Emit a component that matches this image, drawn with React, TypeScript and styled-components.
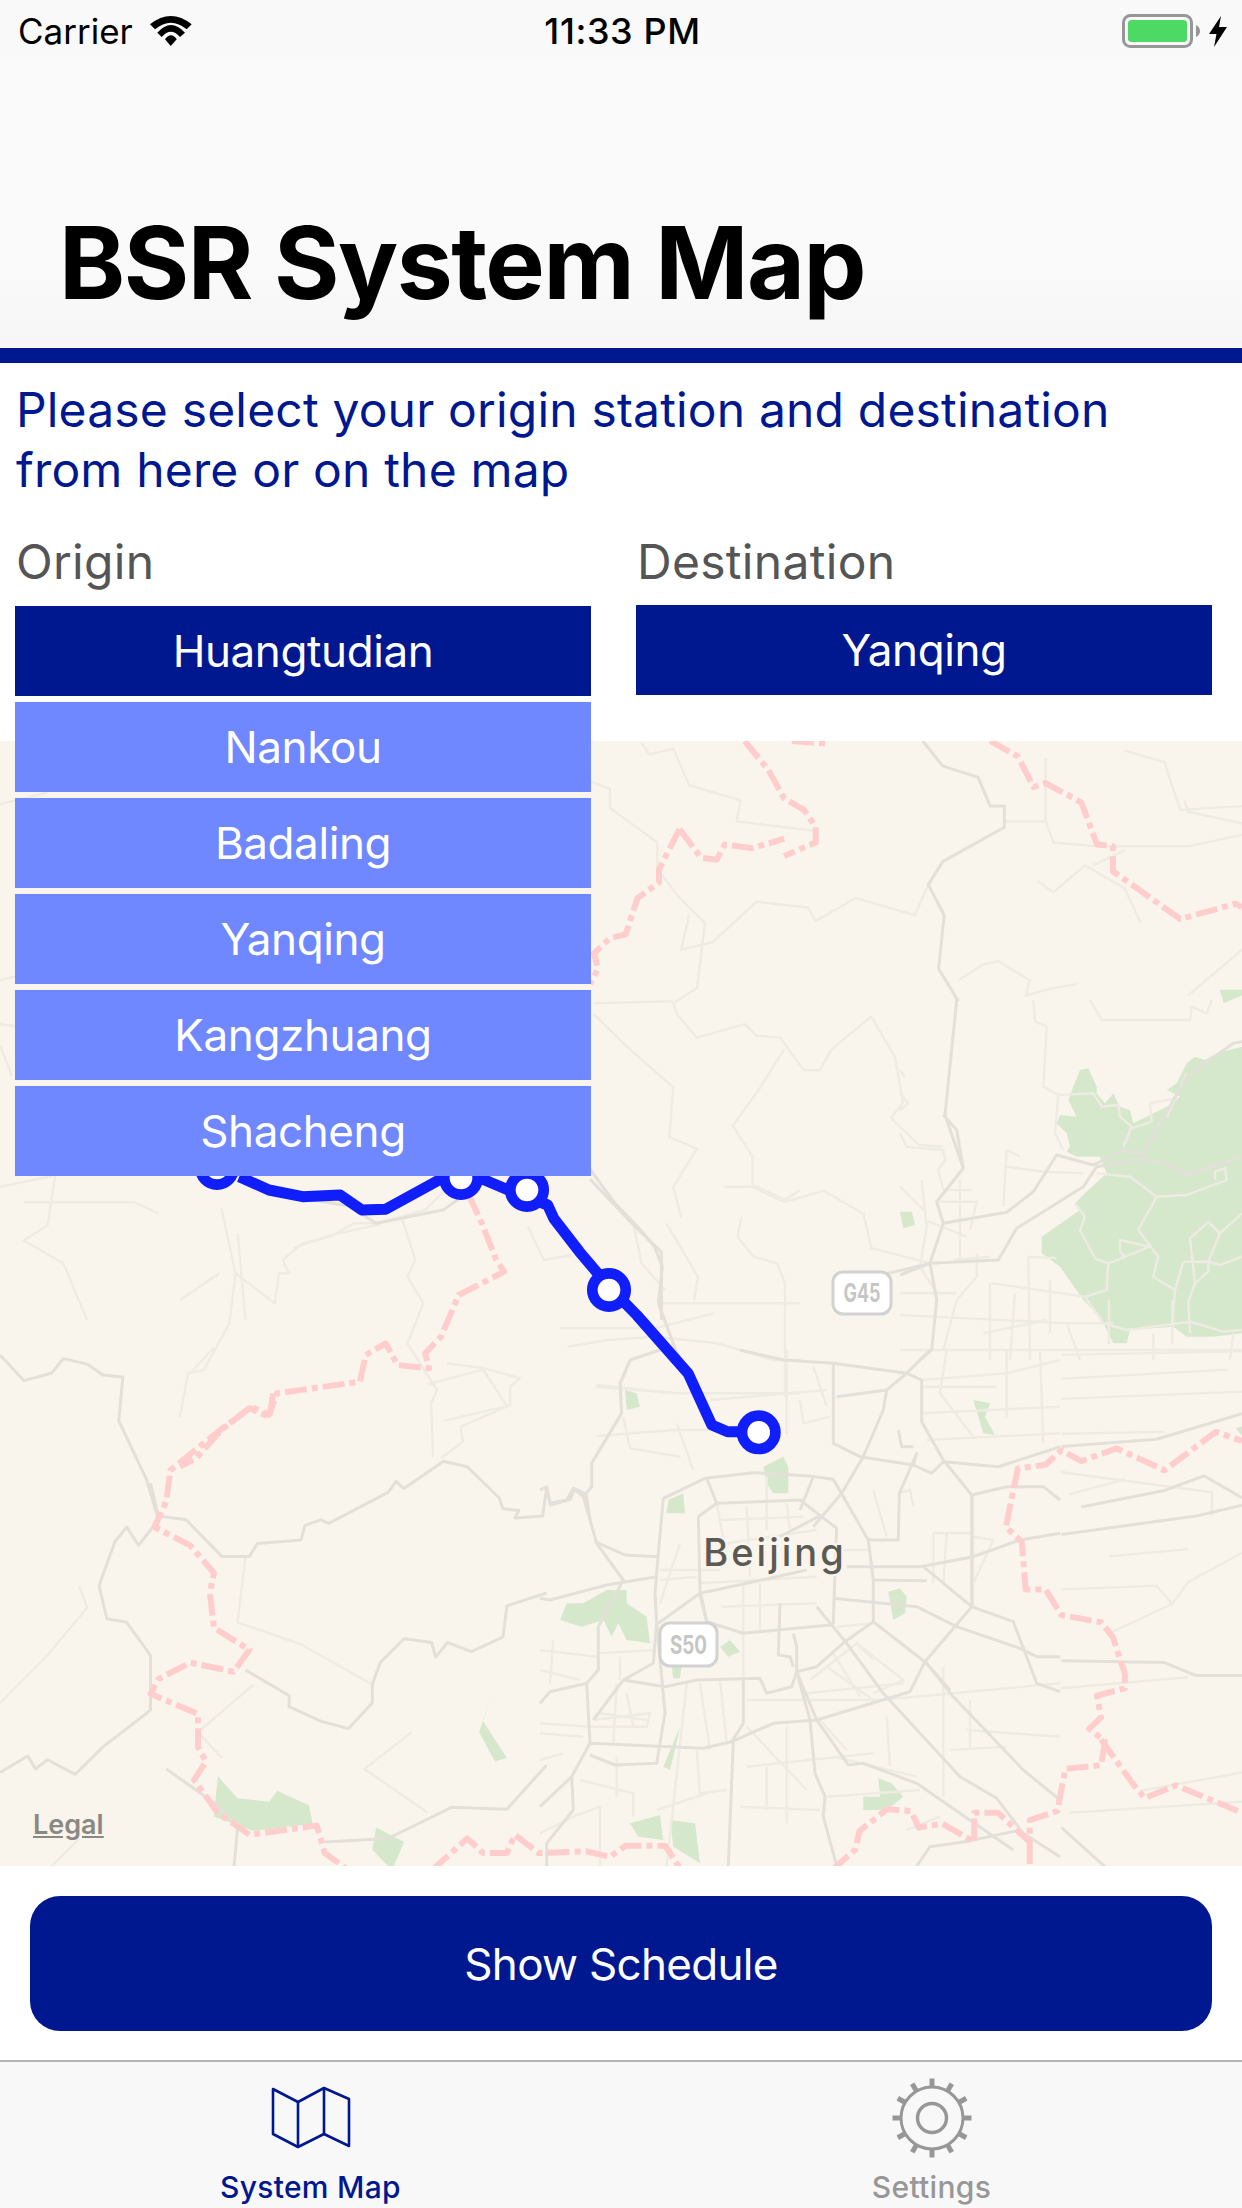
import React from "react";
import styled, { createGlobalStyle } from "styled-components";

const NAVY = "#00188f";

const Global = createGlobalStyle`
  html, body { margin: 0; padding: 0; background: #fff; }
  * { box-sizing: border-box; }
  body { font-family: Inter, "Liberation Sans", sans-serif; }
`;

const Page = styled.div`
  width: 1242px;
  height: 2208px;
  display: flex;
  flex-direction: column;
  overflow: hidden;
  background: #fff;
`;
const Header = styled.header`
  height: 348px;
  background: linear-gradient(#f9f9f9 0%, #fafafa 75%, #f6f6f7 100%);
  display: flex;
  flex-direction: column;
  justify-content: space-between;
`;
const StatusBar = styled.div`
  height: 62px;
  padding: 0 15px 0 18px;
  display: grid;
  grid-template-columns: 1fr auto 1fr;
  align-items: center;
  font-size: 35px;
  color: #000;
`;
const StatusLeft = styled.div`
  display: flex;
  align-items: center;
  gap: 17px;
`;
const StatusRight = styled.div`
  display: flex;
  justify-content: flex-end;
  align-items: center;
  gap: 9px;
`;
const Clock = styled.div`
  font-size: 36px;
  font-weight: 500;
  letter-spacing: 0.6px;
`;
const Title = styled.h1`
  margin: 0;
  padding: 0 0 25px 59px;
  font-size: 100px;
  line-height: 121px;
  font-weight: 700;
  letter-spacing: -1.5px;
  color: #000;
`;
const Rule = styled.div`
  height: 15px;
  background: ${NAVY};
`;
const Intro = styled.p`
  margin: 0;
  padding: 17px 16px 0;
  font-size: 48px;
  line-height: 60px;
  letter-spacing: 0.17px;
  color: ${NAVY};
`;
const Pickers = styled.div`
  height: 241px;
  padding: 30px 30px 0 15px;
  display: grid;
  grid-template-columns: 576px 576px;
  column-gap: 45px;
`;
const Picker = styled.div`
  position: relative;
`;
const PickerLabel = styled.div`
  height: 75px;
  padding-left: 1px;
  font-size: 48px;
  line-height: 64px;
  letter-spacing: 0.3px;
  color: #555;
`;
const Choice = styled.div<{ $active?: boolean; $nudge?: number }>`
  height: 90px;
  margin-top: ${(p) => p.$nudge ?? 0}px;
  display: flex;
  align-items: center;
  justify-content: center;
  font-size: 44px;
  letter-spacing: -0.4px;
  color: #fff;
  background: ${(p) => (p.$active ? NAVY : "#6f87ff")};
`;
const Dropdown = styled.div`
  position: absolute;
  z-index: 3;
  top: 172px;
  left: 0;
  right: 0;
  display: flex;
  flex-direction: column;
  gap: 6px;
`;
const MapArea = styled.div`
  position: relative;
  height: 1125px;
  background: #f9f5ed;
  overflow: hidden;
`;
const MapSvg = styled.svg`
  display: block;
`;
const Legal = styled.a`
  position: absolute;
  left: 33px;
  bottom: 25px;
  font-size: 27px;
  font-weight: 600;
  color: #8a8882;
  text-decoration: underline;
`;
const Action = styled.div`
  height: 194px;
  padding: 30px 30px 29px;
`;
const ScheduleButton = styled.button`
  width: 100%;
  height: 135px;
  border: 0;
  border-radius: 30px;
  background: ${NAVY};
  color: #fff;
  font: 400 44px Inter, "Liberation Sans", sans-serif;
  letter-spacing: -0.7px;
`;
const TabBar = styled.nav`
  height: 148px;
  border-top: 2px solid #b4b4b4;
  background: #f8f8f8;
  display: grid;
  grid-template-columns: 1fr 1fr;
`;
const Tab = styled.div<{ $active?: boolean }>`
  display: flex;
  flex-direction: column;
  align-items: center;
  padding-top: 16px;
  font-size: 30px;
  line-height: 36px;
  font-weight: 500;
  letter-spacing: 0.3px;
  color: ${(p) => (p.$active ? NAVY : "#979797")};
`;
const TabIcon = styled.svg`
  display: block;
  margin-bottom: 11px;
`;

type Src = "a" | "b" | "c" | "d" | "e";
const toPage = (src: Src, s: string) =>
  s
    .trim()
    .split(/\s+/)
    .map((p) => {
      const [x, y] = p.split(",").map(Number);
      let px = 0;
      let py = 0;
      if (src === "a") { px = x / 1.2625; py = 720 + y / 2.613; }
      if (src === "b") { px = x / 1.2625; py = 1300 + y / 2.73; }
      if (src === "c") { px = 180 + x / 2.529; py = 1130 + y / 3; }
      if (src === "d") { px = 540 + x / 3; py = 1350 + y / 3; }
      if (src === "e") { px = 900 + x / 3; py = 1000 + y / 3; }
      return `${px.toFixed(1)},${py.toFixed(1)}`;
    })
    .join(" ");

const tagged = (src: Src, lines: string[]): [Src, string][] => lines.map((l) => [src, l]);

const greens: [Src, string][] = [
  ...tagged("e", [
    "1026,140 950,160 915,180 885,170 860,190 830,250 800,270 840,290 800,320 700,370 690,330 660,320 640,280 615,310 590,280 590,260 565,205 540,210 520,260 505,300 530,350 480,345 470,370 500,400 510,440 500,455 530,470 600,470 620,520 555,580 525,610 540,630 425,710 425,760 480,800 550,900 600,950 640,1030 680,1030 690,990 820,980 860,1010 940,1010 1026,1000",
    "0,635 35,635 45,675 10,685",
  ]),
  ...tagged("a", ["1540,705 1568,705 1568,720 1545,740"]),
  ...tagged("b", [
    "275,1300 300,1360 340,1370 350,1340 390,1380 395,1430 320,1450 270,1410",
    "620,1080 610,1150 640,1250 625,1260 605,1180",
    "475,1440 510,1480 495,1557 470,1500",
    "1560,350 1568,345 1568,370",
  ]),
  ...tagged("d", [
    "255,120 290,130 300,170 260,180",
    "385,450 430,430 435,490 380,490",
    "670,350 730,320 745,350 745,430 700,430 680,400",
    "80,760 130,760 200,720 260,720 260,760 320,800 330,880 260,870 235,820 215,860 190,810 125,830 60,810",
    "1045,725 1080,715 1100,740 1095,790 1060,810",
    "540,890 570,870 600,905 565,920",
    "395,950 425,950 420,985 400,985",
    "1300,150 1350,160 1335,200 1365,255 1330,250",
    "370,1250 420,1130 405,1200 390,1260",
    "270,1420 360,1395 370,1470 295,1460",
    "390,1410 465,1420 480,1540 400,1490",
    "970,1340 1020,1340 1015,1285 1055,1300 1090,1340 1040,1380 970,1380",
  ]),
];

const majorRoads: [Src, string][] = [
  ...tagged("a", [
    "1165,55 1190,120 1235,150 1250,225 1268,225 1268,280 1190,370 1172,430 1192,510 1185,650 1210,735",
    "1175,1420 1050,1480",
    "300,1190 340,1235 440,1270 475,1315 560,1280 620,1190",
    "745,1200 800,1320 835,1390 835,1568",
  ]),
  ...tagged("b", [
    "0,150 30,220 65,200 80,160 110,175 130,205 155,210 150,330 185,490 200,600 175,670 160,620 145,660 125,780 135,870 160,880 190,970 190,1120 130,1220 95,1295 60,1255 45,1280 35,1245 0,1290",
    "190,500 200,590 235,600 280,700 315,700 325,665 380,655 385,615 405,600 415,610 490,525 500,495 510,515 550,455 560,440 590,455 630,540 635,570 655,575 650,595 685,590 690,515 695,560 720,545 725,515 740,530 745,600",
    "310,1010 365,1080 365,1110 405,1150 440,1170 470,1100 470,1050 480,990 510,925 545,935 550,975 565,935 595,960 635,920 640,835 690,800",
    "1340,640 1510,590 1568,560",
    "1340,985 1470,990 1510,1025 1568,1025",
    "1340,400 1460,380 1568,310",
    "1365,565 1470,520 1520,480 1568,540",
    "210,1280 275,1380 300,1440 295,1557",
    "410,1480 490,1470 570,1385 640,1390 690,1270",
    "1340,1440 1400,1557",
  ]),
  ...tagged("c", ["1020,90 1100,220 1165,300 1200,350 1220,410 1210,520 1260,680 1290,730"]),
  ...tagged("d", [
    "370,445 495,385 640,368 810,378 880,388 985,570 1000,690 1000,815 915,875 830,950 770,965 755,1010 680,1030 660,985 470,990 375,1010 250,990 340,940 350,820 345,730 355,610 370,445",
    "475,500 530,460 780,450 890,535 885,660 880,820 870,825 610,850 500,815 480,720 475,500",
    "270,30 240,100 245,190 155,340 155,410 130,440 170,580 250,690 175,830 175,960 140,1000 150,1180 490,1195 575,1175 700,1120 830,1110 1110,1025 1155,935 1295,770 1295,435 1210,330 1145,215 1145,90 1100,70 880,40 730,30 600,0",
    "270,30 360,0",
    "0,745 30,750 200,705 350,680",
    "355,620 255,615 165,575",
    "985,570 1075,570 1078,430 1130,310 1120,345 960,320 880,280 880,40",
    "905,430 970,320 1030,180 1040,120 890,140",
    "1040,120 1100,70 1170,0",
    "1120,345 1175,370 1210,335 1375,350 1560,290",
    "920,650 1140,650 1300,620 1440,570 1560,550",
    "1000,690 1160,692",
    "1150,650 1295,770 1420,815 1490,1000 1560,1025",
    "880,745 1130,770 1250,830 1440,895 1490,920 1560,920",
    "1000,815 1160,940 1240,1040 1450,1260 1560,1350",
    "830,770 920,880 1030,1030 1260,1280 1370,1345 1450,1450 1560,1520",
    "770,965 830,1110 925,1245 970,1240 1130,1300 1275,1400 1420,1500",
    "770,965 810,1110 825,1270 855,1340 850,1400 890,1548",
    "580,1175 565,1548",
    "610,990 610,1120 575,1175",
    "350,820 375,1090 350,1240 225,1245 150,1215",
    "150,1180 95,1280 100,1380 20,1480 20,1548",
    "250,990 160,1110",
    "95,1280 0,1370",
    "1155,935 1230,1020",
    "0,1060 30,1025 140,1000",
    "1130,1548 1170,1490 1275,1475 1440,1440",
    "760,850 770,890 770,965",
    "720,760 715,915 750,920 760,950",
    "355,820 480,730 620,700 800,660",
    "480,735 500,815",
    "835,500 720,560",
    "0,420 20,410 30,460 80,450 100,415 130,440",
    "500,385 530,460",
    "820,380 780,480",
    "905,430 820,530",
    "1120,290 1085,290 1075,240",
    "1295,435 1400,410 1510,410 1560,450",
  ]),
  ...tagged("e", [
    "170,0 135,345 190,505 110,605 130,670 90,790 110,900 95,1050 60,1080",
    "130,345 170,390 190,505",
    "130,670 320,637 400,575 470,465 580,495 670,450 730,460 860,230 1000,130 1026,125",
    "0,825 90,790 295,780 350,685 550,560 590,500 730,475 800,490 860,525 1026,470",
  ]),
];

const minorRoads: [Src, string][] = [
  ...tagged("a", [
    "1268,265 1320,265 1330,320 1385,330",
    "810,60 820,90 850,75 870,170 935,210 930,265 1030,290",
    "745,160 770,180 770,230 830,320 830,390 860,470 890,530 880,700 850,740 855,770 880,830 940,795 955,825 985,830 1015,915 1035,915 1050,860 1100,775 1130,880 1140,1000 1125,1040 1160,1110 1190,1115",
    "750,740 850,735",
    "750,770 795,860 850,960 845,1090 880,1120 850,1220 860,1300",
    "955,475 1020,490 1030,525 1060,490 1080,465 1155,510 1172,430",
    "900,580 955,475",
    "870,510 860,600 900,580",
    "990,860 960,960 925,1060 950,1140 950,1220 990,1260 1040,1230 1090,1290 1100,1380 1175,1420",
    "1210,680 1240,640 1260,630 1300,680 1295,720 1330,700 1360,690",
    "1500,720 1568,600",
    "1320,100 1320,265",
    "1495,210 1500,240 1568,270",
    "1420,80 1470,110 1490,235 1568,225",
    "1310,420 1330,450 1370,380 1420,440 1440,530",
    "1385,330 1500,330 1568,300",
    "1380,380 1420,340",
    "0,220 60,190",
    "0,680 20,670",
    "0,795 20,800",
    "0,850 15,930",
    "0,1220 70,1190 60,1320 30,1360 80,1420 110,1568",
    "30,1260 170,1260 200,1290",
    "300,1340 310,1568",
    "370,1380 420,1345 480,1318",
    "800,1320 810,1420 840,1490",
  ]),
  ...tagged("b", [
    "1400,910 1480,830 1500,770 1568,690",
    "1340,150 1568,140",
    "1340,215 1550,190",
    "1340,365 1470,360",
    "1350,1400 1568,1370",
    "1440,1340 1568,1290",
    "0,1100 60,970 110,840 100,780",
    "240,200 270,130",
    "310,700 300,880 380,940 470,1050",
    "560,330 640,290 610,190 540,230",
    "1350,530 1420,490",
    "1340,790 1460,780 1480,830",
    "1340,1060 1500,1030",
    "1340,470 1530,525 1530,590",
    "1400,700 1500,680",
    "1340,270 1568,250",
    "1400,0 1400,120",
    "1480,0 1480,120",
    "320,1050 250,1180 280,1250",
    "520,1180 460,1280 540,1400",
    "100,1470 60,1557",
  ]),
  ...tagged("c", [
    "1140,690 1115,760 1115,850 1040,1000",
    "1050,770 1260,790 1568,790",
    "960,595 1200,595 1350,550",
    "980,650 1080,630 1200,620 1360,640 1500,690 1568,690",
    "1230,280 1310,440 1300,510",
    "1420,260 1410,320 1450,380 1510,400 1530,460 1530,800",
    "1375,170 1460,170 1530,210 1568,180",
    "1210,520 1568,520",
    "880,290 920,390 990,375",
    "560,260 595,390 575,440 615,520 575,640 650,780 635,820 640,980",
    "675,700 770,715 860,745 835,770 835,825 710,890 715,935 660,985",
    "260,390 310,340 380,320 440,280 500,280 620,240 680,170",
    "105,235 140,430 125,580 60,720 20,730 0,860",
    "140,430 240,520 250,430 275,430 260,390",
    "0,510 100,430",
  ]),
  ...tagged("d", [
    "170,105 400,130",
    "170,258 400,240 510,240",
    "250,200 270,295 420,320",
    "510,150 860,120",
    "410,220 460,360",
    "740,0 740,250",
    "780,150 790,220 870,200",
    "820,50 860,170",
    "1145,90 1400,70 1560,30",
    "1145,190 1560,170",
    "1160,270 1560,250",
    "1220,0 1200,130 1300,260",
    "1400,0 1400,200",
    "1500,0 1510,280",
    "1150,110 1370,110",
    "540,510 790,500",
    "530,460 560,620",
    "620,470 630,680",
    "680,380 680,540",
    "740,460 750,540",
    "560,580 830,540",
    "360,660 540,660",
    "480,700 830,680",
    "545,770 830,760",
    "660,700 660,840",
    "360,690 470,680",
    "610,700 610,1000",
    "1000,420 1040,560",
    "1075,430 1110,420 1120,470",
    "880,600 985,600",
    "1180,550 1290,550",
    "1180,550 1180,700",
    "1220,550 1210,700",
    "1300,560 1360,570 1300,700",
    "890,830 1000,820",
    "810,990 950,880 1090,990 1000,1030",
    "860,950 1000,1050",
    "880,910 960,1040",
    "800,1030 1090,1000",
    "950,880 1000,930",
    "480,1000 510,1200",
    "540,990 560,1180",
    "440,1000 380,1548",
    "620,1050 1030,1050",
    "160,1110 330,1090 320,1130 150,1130",
    "180,1090 320,1110",
    "230,1000 220,1180",
    "260,1030 280,1130",
    "0,1120 150,1130",
    "0,1150 130,1160",
    "0,900 170,920",
    "40,870 30,1000",
    "0,960 120,990",
    "180,910 340,900",
    "240,920 240,990",
    "620,1250 1000,1210",
    "680,1250 680,1380",
    "740,1130 740,1420",
    "600,1370 840,1380",
    "1020,1050 1560,1000",
    "1210,950 1210,1340",
    "1290,1050 1290,1200",
    "1280,1140 1560,1160",
    "1040,1100 1050,1250",
    "860,1340 1140,1320",
    "620,1130 800,1320",
    "840,1110 920,1200",
    "880,1220 1130,1280",
    "100,1400 180,1370 180,1548",
    "0,1230 70,1210",
    "120,1290 280,1330 280,1400",
    "230,1220 230,1340",
    "500,1330 350,1380",
    "470,1200 480,1330 560,1320",
    "0,1450 100,1400",
    "1230,1200 1400,1190",
    "1100,1440 1200,1400",
    "1300,430 1300,770",
    "420,580 360,760",
  ]),
  ...tagged("e", [
    "400,0 405,65 440,80 430,260 475,285 465,400 490,450",
    "570,0 605,60 870,60 875,20 920,40 935,0",
    "475,285 580,280 605,320 655,315 660,350 695,380 670,440",
    "750,310 830,295",
    "750,310 755,365 695,385",
    "860,220 800,350",
    "590,520 690,530 770,590 860,585 980,540 975,505 945,515 945,540",
    "770,590 715,690 775,770 760,830 825,870 815,1000",
    "525,610 555,650 540,690 585,775 625,790 620,870 555,890",
    "625,790 750,740 660,720 660,755 675,770",
    "925,665 870,715 885,850 865,905 870,1000",
    "925,665 960,700 1026,640",
    "960,700 925,785 925,815 885,850",
    "850,785 825,870",
    "850,785 925,785 960,795 1026,770",
    "555,890 610,970 680,990 870,965 970,995 1026,990",
    "385,770 390,1080",
    "385,770 470,775",
    "270,850 270,1080",
    "275,850 555,890",
    "0,945 500,970 640,970",
    "0,880 170,880",
    "0,1050 1026,1050",
    "320,450 310,620",
    "320,450 360,470",
    "320,500 430,515 550,520",
    "180,540 180,790",
    "130,570 215,570",
    "120,605 230,605 210,690",
    "75,660 200,710",
    "65,540 80,680 60,800 110,880",
    "160,780 270,770",
    "230,760 230,830 170,900 130,1050",
    "0,210 15,230",
    "0,280 25,310 0,330",
    "0,400 20,440 130,450 135,480 115,510 130,570",
    "0,560 70,630",
    "250,1000 440,960",
    "330,1080 345,880",
    "450,840 450,1000",
    "500,970 540,1080",
    "760,1000 760,1080",
    "1000,1000 990,1080",
  ]),
];

const borders: [Src, string][] = [
  ...tagged("a", [
    "940,55 970,130 990,205 1015,235 1030,280 1030,320 990,355",
    "1000,55 1045,62",
    "858,285 885,360 905,365 915,325 950,335 990,310",
    "858,285 832,390 832,425 805,465 790,560 770,570 750,610 755,650 745,690",
    "1250,55 1285,95 1305,175 1320,165 1365,215 1385,325 1405,330 1405,395 1490,520 1560,480 1568,490",
  ]),
  ...tagged("c", [
    "730,195 760,270 800,390 820,425 705,495 660,620 620,670 630,715 550,705 520,640 470,675 455,755 245,790 225,855 180,830 105,900 40,985 0,1010",
  ]),
  ...tagged("b", [
    "345,255 340,320 315,295 275,360 215,465 210,550 195,620 240,670 270,745 265,800 270,895 315,955 295,1015 240,990 200,1035 190,1075 250,1130 250,1220 260,1260 245,1310 275,1400 315,1460 400,1435 410,1510 440,1557",
    "545,1557 590,1470 610,1510 640,1510 650,1460 680,1510 740,1505 770,1520 790,1490 840,1490 860,1557",
    "1050,1557 1080,1500 1085,1450 1120,1390 1150,1395 1160,1440 1190,1430 1230,1480 1230,1400 1260,1400 1300,1480 1300,1420 1335,1395 1345,1280 1390,1270 1395,1205 1375,1170 1390,1140 1385,1080 1420,1060 1420,1020 1405,920 1390,880 1340,860 1320,790 1295,790 1290,660 1270,620 1285,460 1320,450 1340,410 1365,440 1410,405 1470,465 1535,360 1568,385",
    "1300,1480 1300,1557",
    "1390,1200 1430,1320 1445,1360 1485,1325 1568,1400",
  ]),
];

const routePoints =
  "150,140 225,180 310,200 405,195 460,240 520,238 640,160 700,120 760,145 830,180 930,225 945,265 1010,365 1085,470 1155,555 1285,730 1345,885 1385,905 1465,905";
const stations: [number, number][] = [
  [217, 1168],
  [461, 1178],
  [527, 1190],
  [609, 1290],
  [758.7, 1432.3],
];

const Shield = ({ x, y, w, h, label }: { x: number; y: number; w: number; h: number; label: string }) => (
  <g>
    <rect x={x} y={y} width={w} height={h} rx={10} fill="#fff" stroke="#d2d2d0" strokeWidth={3} />
    <text
      x={x + w / 2}
      y={y + h / 2 + 9}
      textAnchor="middle"
      textLength={37}
      lengthAdjust="spacingAndGlyphs"
      fontFamily="Inter, sans-serif"
      fontWeight={700}
      fontSize={25}
      fill="#c6c6c4"
    >
      {label}
    </text>
  </g>
);

function MapDrawing() {
  return (
    <MapSvg width={1242} height={1125} viewBox="0 741 1242 1125">
      {greens.map(([src, pts], i) => (
        <polygon key={i} points={toPage(src, pts)} fill="#d6e8cc" />
      ))}
      <g fill="none" stroke="#eeebe3" strokeWidth={2.4} strokeLinejoin="round">
        {minorRoads.map(([src, pts], i) => (
          <polyline key={i} points={toPage(src, pts)} />
        ))}
      </g>
      <g fill="none" stroke="#e3e0d9" strokeWidth={3} strokeLinejoin="round">
        {majorRoads.map(([src, pts], i) => (
          <polyline key={i} points={toPage(src, pts)} />
        ))}
      </g>
      <g fill="none" stroke="#ffcdcb" strokeWidth={6} strokeDasharray="22 5 6 5" strokeLinejoin="round">
        {borders.map(([src, pts], i) => (
          <polyline key={i} points={toPage(src, pts)} />
        ))}
      </g>
      <polyline
        points={toPage("c", routePoints)}
        fill="none"
        stroke="#0f1efa"
        strokeWidth={11}
        strokeLinejoin="round"
      />
      {stations.map(([x, y], i) => (
        <circle key={i} cx={x} cy={y} r={16.7} fill="#fff" stroke="#0f1efa" strokeWidth={10.7} />
      ))}
      <Shield x={833} y={1272} w={58} h={42} label="G45" />
      <Shield x={660} y={1623} w={57} h={43} label="S50" />
      <text
        x={775}
        y={1566}
        textAnchor="middle"
        fontFamily="Inter, sans-serif"
        fontWeight={500}
        fontSize={38}
        letterSpacing={3}
        fill="#5c5a55"
        stroke="#f9f5ed"
        strokeWidth={4}
        paintOrder="stroke"
      >
        Beijing
      </text>
    </MapSvg>
  );
}

const WifiIcon = () => (
  <svg width="42" height="30" viewBox="0 0 42 30">
    <path d="M0 8.3 Q20.9 -8.3 41.7 8.3 L36.7 13.3 Q20.9 0.1 5 13.3 Z" fill="#000" />
    <path d="M7.3 16.7 Q21 1.3 35 16.7 L30 21 Q20.9 10.4 11.7 21 Z" fill="#000" />
    <path d="M15 23.3 Q20.9 15.3 26.7 23.3 L20.7 30 Z" fill="#000" />
  </svg>
);

const BatteryIcon = () => (
  <svg width="78" height="34" viewBox="0 0 78 34">
    <rect x="1.5" y="1.5" width="68" height="31" rx="7" fill="none" stroke="#979797" strokeWidth="3" />
    <rect x="6" y="6" width="59" height="22" rx="3.5" fill="#4cd964" />
    <path d="M74 11 Q78 13 78 17 Q78 21 74 23 Z" fill="#979797" />
  </svg>
);

const BoltIcon = () => (
  <svg width="18" height="31" viewBox="0 0 18 31">
    <path d="M12 0 L0 18 L7.5 18 L5 31 L18 11 L10 11 Z" fill="#000" />
  </svg>
);

const FoldedMapIcon = () => (
  <TabIcon width="80" height="80" viewBox="0 0 80 80" fill="none" stroke={NAVY} strokeWidth="2.6" strokeLinejoin="round">
    <path d="M2 11 L27 24 L53 10 L78 21 L78 68 L53 56 L27 69 L2 56 Z" />
    <path d="M27 24 V69 M53 10 V56" />
  </TabIcon>
);

const teeth = Array.from({ length: 12 }, (_, i) => i * 30);
const GearIcon = () => (
  <TabIcon width="80" height="80" viewBox="0 0 80 80" fill="none" stroke="#979797">
    <circle cx="40" cy="40" r="31" strokeWidth="3" />
    <circle cx="40" cy="40" r="14.5" strokeWidth="3.5" />
    {teeth.map((a) => (
      <rect key={a} x="37.5" y="0.5" width="5" height="9" fill="#979797" stroke="none" transform={`rotate(${a} 40 40)`} />
    ))}
  </TabIcon>
);

const originChoices = ["Nankou", "Badaling", "Yanqing", "Kangzhuang", "Shacheng"];

export default function App() {
  return (
    <Page>
      <Global />
      <Header>
        <StatusBar>
          <StatusLeft>
            <span>Carrier</span>
            <WifiIcon />
          </StatusLeft>
          <Clock>11:33 PM</Clock>
          <StatusRight>
            <BatteryIcon />
            <BoltIcon />
          </StatusRight>
        </StatusBar>
        <Title>BSR System Map</Title>
      </Header>
      <Rule />
      <Intro>
        Please select your origin station and destination
        <br />
        from here or on the map
      </Intro>
      <Pickers>
        <Picker>
          <PickerLabel>Origin</PickerLabel>
          <Choice $active $nudge={1}>Huangtudian</Choice>
          <Dropdown>
            {originChoices.map((c) => (
              <Choice key={c}>{c}</Choice>
            ))}
          </Dropdown>
        </Picker>
        <Picker>
          <PickerLabel>Destination</PickerLabel>
          <Choice $active>Yanqing</Choice>
        </Picker>
      </Pickers>
      <MapArea>
        <MapDrawing />
        <Legal>Legal</Legal>
      </MapArea>
      <Action>
        <ScheduleButton>Show Schedule</ScheduleButton>
      </Action>
      <TabBar>
        <Tab $active>
          <FoldedMapIcon />
          System Map
        </Tab>
        <Tab>
          <GearIcon />
          Settings
        </Tab>
      </TabBar>
    </Page>
  );
}
